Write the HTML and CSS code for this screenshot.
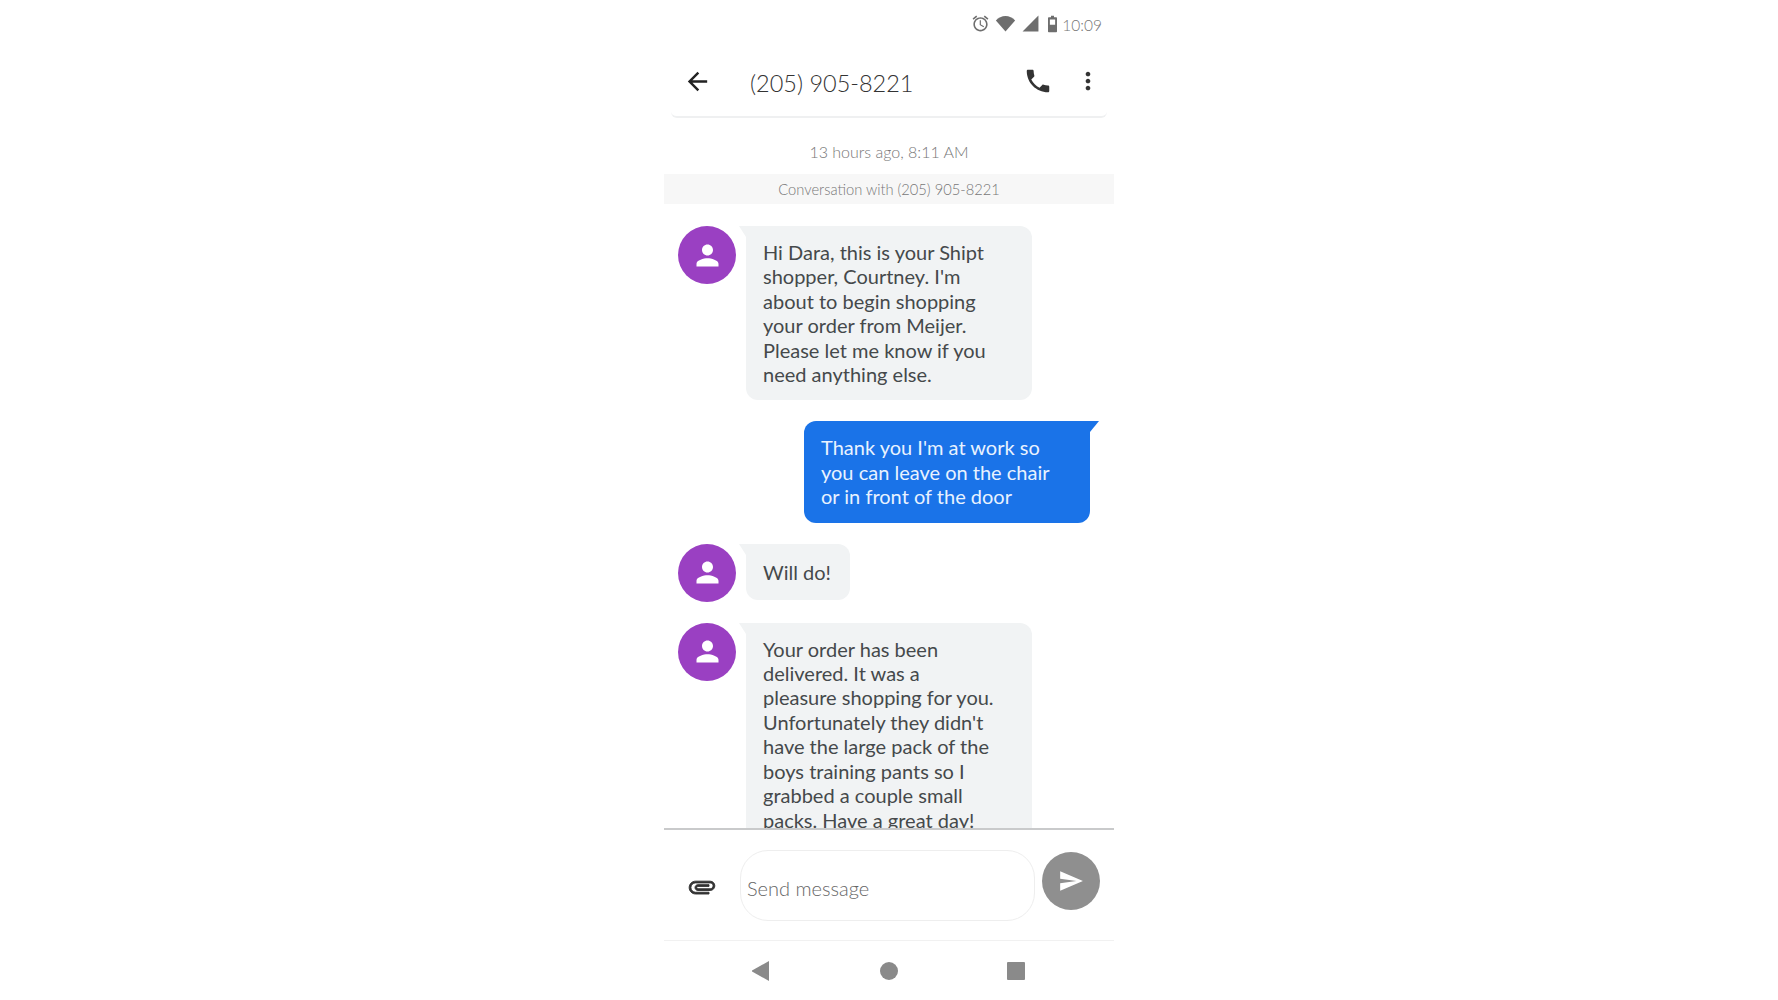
FILE: index.html
```html
<!DOCTYPE html>
<html lang="en">
<head>
    <meta charset="UTF-8">
    <meta name="viewport" content="width=device-width, initial-scale=1.0">
    <title>Messages</title>
    <link rel="stylesheet" href="styles.css">
</head>
<body>
    <div class="phone">
        <!-- Status bar -->
        <div class="status-bar">
            <svg class="status-icon" viewBox="0 0 24 24"><path d="M22 5.72l-4.6-3.86-1.29 1.53 4.6 3.86L22 5.72zM7.88 3.39L6.6 1.86 2 5.71l1.29 1.53 4.59-3.85zM12.5 8H11v6l4.75 2.85.75-1.23-4-2.37V8zM12 4c-4.97 0-9 4.03-9 9s4.02 9 9 9c4.97 0 9-4.03 9-9s-4.03-9-9-9zm0 16c-3.87 0-7-3.13-7-7s3.13-7 7-7 7 3.13 7 7-3.13 7-7 7z"/></svg>
            <svg class="status-icon wifi" viewBox="0 0 24 24"><path d="M12 21L1 8.5C4 5.6 7.8 3.5 12 3.5s8 2.1 11 5L12 21z"/></svg>
            <svg class="status-icon" viewBox="0 0 24 24"><path d="M2 22L22 2v20H2z"/></svg>
            <svg class="status-icon battery" viewBox="0 0 14 24"><path d="M5 1h4v2h3c.6 0 1 .4 1 1v18c0 .6-.4 1-1 1H2c-.6 0-1-.4-1-1V4c0-.6.4-1 1-1h3V1zM3.500 6v7h7V6h-7z"/></svg>
            <span class="status-time">10:09</span>
        </div>

        <!-- Header -->
        <div class="top-bar">
            <svg class="back-icon" viewBox="0 0 24 24"><path d="M20 11H7.830l5.590-5.590L12 4l-8 8 8 8 1.410-1.410L7.830 13H20v-2z"/></svg>
            <div class="contact-name">(205) 905-8221</div>
            <svg class="call-icon" viewBox="0 0 24 24"><path d="M6.620 10.790c1.440 2.830 3.760 5.140 6.590 6.590l2.200-2.200c.27-.27.67-.36 1.020-.24 1.120.37 2.330.57 3.570.57.55 0 1 .45 1 1V20c0 .55-.45 1-1 1-9.390 0-17-7.610-17-17 0-.55.45-1 1-1h3.500c.55 0 1 .45 1 1 0 1.250.2 2.450.57 3.570.11.35.03.74-.25 1.020l-2.200 2.200z"/></svg>
            <svg class="more-icon" viewBox="0 0 24 24"><path d="M12 8c1.100 0 2-.9 2-2s-.9-2-2-2-2 .9-2 2 .9 2 2 2zm0 2c-1.100 0-2 .9-2 2s.9 2 2 2 2-.9 2-2-.9-2-2-2zm0 6c-1.100 0-2 .9-2 2s.9 2 2 2 2-.9 2-2-.9-2-2-2z"/></svg>
        </div>

        <div class="timestamp">13 hours ago, 8:11 AM</div>
        <div class="conversation-band">Conversation with (205) 905-8221</div>

        <!-- Messages -->
        <div class="thread">
            <div class="message">
                <div class="avatar"><svg viewBox="0 0 24 24"><path d="M12 12c2.210 0 4-1.790 4-4s-1.790-4-4-4-4 1.790-4 4 1.790 4 4 4zm0 2c-2.670 0-8 1.340-8 4v2h16v-2c0-2.660-5.330-4-8-4z"/></svg></div>
                <div class="bubble bubble-in">Hi Dara, this is your Shipt<br>shopper, Courtney. I'm<br>about to begin shopping<br>your order from Meijer.<br>Please let me know if you<br>need anything else.</div>
            </div>
            <div class="message message-out">
                <div class="bubble bubble-out">Thank you I'm at work so<br>you can leave on the chair<br>or in front of the door</div>
            </div>
            <div class="message">
                <div class="avatar"><svg viewBox="0 0 24 24"><path d="M12 12c2.210 0 4-1.790 4-4s-1.790-4-4-4-4 1.790-4 4 1.790 4 4 4zm0 2c-2.670 0-8 1.340-8 4v2h16v-2c0-2.660-5.330-4-8-4z"/></svg></div>
                <div class="bubble bubble-in bubble-short">Will do!</div>
            </div>
            <div class="message">
                <div class="avatar"><svg viewBox="0 0 24 24"><path d="M12 12c2.210 0 4-1.790 4-4s-1.790-4-4-4-4 1.790-4 4 1.790 4 4 4zm0 2c-2.670 0-8 1.340-8 4v2h16v-2c0-2.660-5.330-4-8-4z"/></svg></div>
                <div class="bubble bubble-in">Your order has been<br>delivered. It was a<br>pleasure shopping for you.<br>Unfortunately they didn't<br>have the large pack of the<br>boys training pants so I<br>grabbed a couple small<br>packs. Have a great day!</div>
            </div>
        </div>

        <!-- Composer -->
        <div class="composer">
            <svg class="attach-icon" viewBox="0 0 24 24"><path d="M16.500 6v11.500c0 2.210-1.790 4-4 4s-4-1.790-4-4V5c0-1.380 1.120-2.500 2.500-2.500s2.500 1.120 2.500 2.500v10.500c0 .55-.45 1-1 1s-1-.45-1-1V6H10v9.500c0 1.380 1.120 2.500 2.500 2.500s2.500-1.120 2.500-2.500V5c0-2.210-1.790-4-4-4S7 2.790 7 5v12.500c0 3.040 2.460 5.500 5.500 5.500s5.500-2.460 5.500-5.500V6h-1.500z"/></svg>
            <div class="message-input">Send message</div>
            <div class="send-btn"><svg viewBox="0 0 24 24"><path d="M2.010 21L23 12 2.010 3 2 10l15 2-15 2z"/></svg></div>
        </div>

        <!-- Android nav -->
        <div class="nav-bar">
            <svg class="nav-icon" viewBox="2 0 20 20"><path d="M19 0v20L1 10z"/></svg>
            <svg class="nav-icon" viewBox="0 0 20 20"><circle cx="10" cy="10" r="9"/></svg>
            <svg class="nav-icon" viewBox="0 0 20 20"><rect x="1" y="1" width="18" height="18" rx="1"/></svg>
        </div>
    </div>
</body>
</html>
```

FILE: styles.css
```css
body, html {
    margin: 0;
    padding: 0;
    height: 100%;
    background: #fff;
    font-family: 'Lato', sans-serif;
}

body {
    display: flex;
    justify-content: center;
}

.phone {
    width: 450px;
    height: 1000px;
    display: flex;
    flex-direction: column;
    overflow: hidden;
}

.status-bar {
    height: 50px;
    flex: none;
    display: flex;
    align-items: center;
    justify-content: flex-end;
    gap: 5px;
    padding-right: 12px;
    box-sizing: border-box;
    color: #777;
}

.status-icon {
    width: 19px;
    height: 19px;
    fill: #6e6e6e;
    margin-top: -3px;
}

.wifi {
    width: 21px;
    height: 21px;
}

.battery {
    width: 11px;
    height: 18px;
    margin-left: 2px;
    margin-right: -1px;
}

.status-time {
    font-size: 15.5px;
    font-weight: 300;
    color: #757575;
    margin-top: -1px;
}

.top-bar {
    height: 68px;
    margin: 0 7px;
    flex: none;
    display: flex;
    align-items: center;
    border-bottom: 2px solid #eff0f1;
    border-radius: 0 0 6px 6px;
    box-sizing: border-box;
}

.back-icon {
    width: 29px;
    height: 29px;
    margin-left: 12px;
    margin-top: -4px;
    fill: #222;
}

.contact-name {
    font-size: 23.5px;
    font-weight: 300;
    color: #333;
    margin-left: 38px;
    flex: 1;
}

.call-icon {
    width: 30px;
    height: 30px;
    fill: #333;
    margin-top: -5px;
}

.more-icon {
    width: 28px;
    height: 28px;
    fill: #333;
    margin: -5px 5px 0 21px;
}

.timestamp {
    height: 56px;
    flex: none;
    display: flex;
    align-items: center;
    justify-content: center;
    font-size: 16px;
    font-weight: 300;
    color: #777;
    box-sizing: border-box;
    padding-top: 10px;
}

.conversation-band {
    height: 30px;
    flex: none;
    display: flex;
    align-items: center;
    justify-content: center;
    background: #f7f7f7;
    font-size: 14.7px;
    font-weight: 300;
    color: #777;
}

.thread {
    height: 626px;
    flex: none;
    box-sizing: border-box;
    overflow: hidden;
    padding: 22px 24px 0 14px;
    display: flex;
    flex-direction: column;
    gap: 21px;
    border-bottom: 2px solid #c9cacb;
}

.message {
    display: flex;
    align-items: flex-start;
    gap: 10px;
    flex: none;
}

.message-out {
    justify-content: flex-end;
}

.avatar {
    width: 58px;
    height: 58px;
    flex: none;
    border-radius: 50%;
    background: #9a40c2;
    display: flex;
    align-items: center;
    justify-content: center;
}

.avatar svg {
    width: 33px;
    height: 33px;
    fill: #fff;
}

.bubble {
    position: relative;
    padding: 14px 17px;
    font-size: 20px;
    line-height: 24.4px;
    white-space: nowrap;
    border-radius: 12px;
}

.bubble-in {
    width: 286px;
    box-sizing: border-box;
    background: #f1f3f4;
    color: #45494b;
    border-top-left-radius: 0;
}

.bubble-in::before {
    content: "";
    position: absolute;
    left: -7px;
    top: 0;
    border-top: 11px solid #f1f3f4;
    border-left: 7px solid transparent;
}

.bubble-short {
    width: 104px;
    padding-top: 16px;
    padding-bottom: 16px;
}

.bubble-out {
    width: 286px;
    box-sizing: border-box;
    background: #1a73e8;
    color: #e8f2ff;
    border-top-right-radius: 0;
}

.bubble-out::after {
    content: "";
    position: absolute;
    right: -9px;
    top: 0;
    border-top: 11px solid #1a73e8;
    border-right: 9px solid transparent;
}

.composer {
    height: 111px;
    flex: none;
    display: flex;
    align-items: center;
    box-sizing: border-box;
    padding: 0 14px 0 24px;
    border-bottom: 1px solid #f1f1f1;
}

.attach-icon {
    width: 28px;
    height: 28px;
    fill: #333;
    stroke: #333;
    stroke-width: 0.8;
    transform: rotate(90deg);
    margin-right: 24px;
    margin-top: 3px;
}

.message-input {
    width: 295px;
    height: 71px;
    box-sizing: border-box;
    border: 1px solid #eeeeee;
    border-radius: 28px;
    padding: 5px 6px 0;
    display: flex;
    align-items: center;
    font-size: 20px;
    font-weight: 300;
    color: #666;
}

.send-btn {
    width: 58px;
    height: 58px;
    flex: none;
    margin: -8px 0 0 7px;
    border-radius: 50%;
    background: #8f8f8f;
    display: flex;
    align-items: center;
    justify-content: center;
}

.send-btn svg {
    width: 26px;
    height: 26px;
    fill: #fff;
}

.nav-bar {
    height: 59px;
    flex: none;
    display: flex;
    align-items: center;
    justify-content: center;
    gap: 107px;
}

.nav-icon {
    width: 20px;
    height: 20px;
    fill: #8a8a8a;
}
```
